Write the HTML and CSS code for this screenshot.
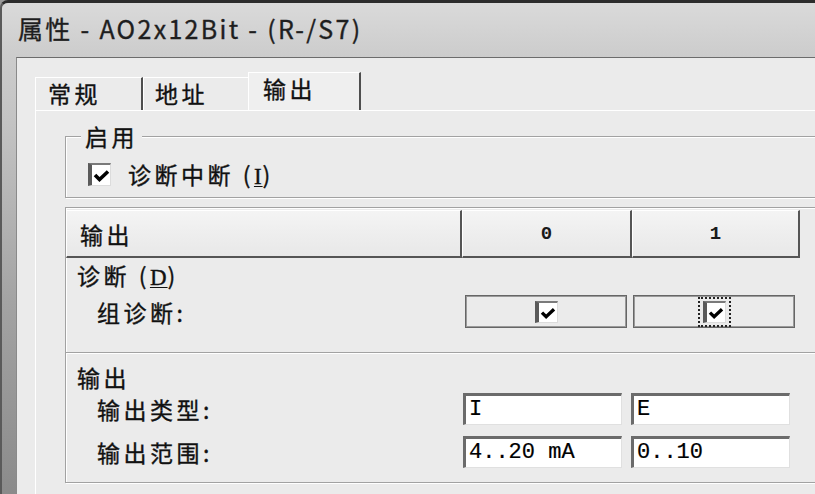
FILE: index.html
```html
<!DOCTYPE html>
<html lang="zh-CN">
<head>
<meta charset="utf-8">
<title>属性 - AO2x12Bit - (R-/S7)</title>
<link rel="stylesheet" href="styles.css">
</head>
<body>
<div class="window">
  <div class="titlebar">属性 - AO2x12Bit - (R-/S7)</div>
  <div class="client">
    <div class="tabs">
      <div class="tab tab-general">常规</div>
      <div class="tab tab-address">地址</div>
      <div class="tab tab-active">输出</div>
    </div>
    <div class="panel">
      <fieldset class="group">
        <legend>启用</legend>
        <div class="chk">
          <span class="box"><svg viewBox="0 0 16 14" width="17" height="14"><path d="M1.5 6 L6 10.5 L14.5 2.5" fill="none" stroke="#000" stroke-width="3.6"/></svg></span>
          <span class="chk-text">诊断中断 (<u class="acc">I</u>)</span>
        </div>
      </fieldset>
      <div class="grid">
        <div class="hrow">
          <div class="hcell hlabel">输出</div>
          <div class="hcell hcol0">0</div>
          <div class="hcell hcol1">1</div>
        </div>
        <div class="sec sec-diag">
          <div class="stitle">诊断 (<u class="acc">D</u>)</div>
          <div class="row row-cb">
            <div class="rlabel rlabel-cb">组诊断:</div>
            <div class="cbcell">
              <span class="box box-sm"><svg viewBox="0 0 16 14" width="16" height="13"><path d="M1.5 6 L6 10.5 L14.5 2.5" fill="none" stroke="#000" stroke-width="3.6"/></svg></span>
            </div>
            <div class="cbcell">
              <span class="focus"><span class="box box-sm"><svg viewBox="0 0 16 14" width="16" height="13"><path d="M1.5 6 L6 10.5 L14.5 2.5" fill="none" stroke="#000" stroke-width="3.6"/></svg></span></span>
            </div>
          </div>
        </div>
        <div class="sec sec-out">
          <div class="stitle">输出</div>
          <div class="row row-in">
            <div class="rlabel rlabel-in">输出类型:</div>
            <div class="field">I</div>
            <div class="field">E</div>
          </div>
          <div class="row row-in row-in2">
            <div class="rlabel rlabel-in">输出范围:</div>
            <div class="field">4..20 mA</div>
            <div class="field">0..10</div>
          </div>
        </div>
      </div>
    </div>
  </div>
</div>
</body>
</html>
```
FILE: styles.css
```css
* { box-sizing: border-box; }
html, body {
  margin: 0;
  padding: 0;
  width: 815px;
  height: 494px;
  overflow: hidden;
}
body {
  font-family: "Noto Sans CJK SC", "Noto Sans", sans-serif;
  color: #111;
  background: #9a9a9a;
  -webkit-text-stroke: 0.35px currentColor;
}
.window {
  width: 815px;
  height: 494px;
  border-top: 3px solid #2c2c2c;
  border-left: 2px solid #5a5a5a;
  border-top-left-radius: 8px;
  background: linear-gradient(to bottom, #dadada 0, #cccccc 54px, #c3c3c3 120px, #a3a3a3 300px, #8a8a8a 494px);
  display: flex;
  flex-direction: column;
  overflow: hidden;
}
.titlebar {
  height: 54px;
  flex: none;
  display: flex;
  align-items: center;
  padding: 0 0 4px 16px;
  font-size: 25px;
  letter-spacing: 2.3px;
  color: #1e1e1e;
  white-space: nowrap;
}
.client {
  flex: 1;
  margin-left: 14px;
  border-top: 1px solid #6c6c6c;
  border-left: 1px solid #8a8a8a;
  background: #ebebeb;
  padding: 14px 0 0 18px;
  display: flex;
  flex-direction: column;
}
.tabs {
  display: flex;
  align-items: flex-end;
  height: 38px;
  flex: none;
}
.tab {
  height: 33px;
  border-top: 1px solid #fff;
  border-left: 1px solid #fff;
  font-size: 23px;
  letter-spacing: 3.5px;
  line-height: 28px;
  padding-top: 1px;
  white-space: nowrap;
}
.tab-general {
  width: 108px;
  padding-left: 12px;
  border-right: 2px solid #4e4e4e;
}
.tab-address {
  width: 105px;
  padding-left: 11px;
}
.tab-active {
  width: 113px;
  height: 38px;
  padding-left: 14px;
  border-right: 2px solid #4e4e4e;
  background: #efefef;
}
.panel {
  flex: 1;
  border-top: 1px solid #fff;
  border-left: 1px solid #fff;
  margin-right: -80px;
  padding: 12px 0 0 29px;
}
.group {
  margin: 0;
  min-width: 0;
  border: 1px solid #a2a2a2;
  box-shadow: inset 1px 1px 0 #fff, 1px 1px 0 #fff;
  padding: 0 0 11px 15px;
}
.group legend {
  padding: 0 4px;
  font-size: 23px;
  letter-spacing: 3.5px;
  line-height: 26px;
  background: #ebebeb;
}
.chk {
  display: flex;
  align-items: center;
  height: 24px;
  margin: 13px 0 0 7px;
  font-size: 23px;
  letter-spacing: 3.5px;
  white-space: nowrap;
}
.box {
  width: 23px;
  height: 23px;
  flex: none;
  display: flex;
  align-items: center;
  justify-content: center;
  background: #fff;
  border-top: 2px solid #7a7a7a;
  border-left: 4px solid #5a5a5a;
  border-right: 1px solid #dcdcdc;
  border-bottom: 1px solid #dcdcdc;
  padding-top: 3px;
  -webkit-text-stroke: 0;
}
.chk .box { margin-right: 17px; }
.acc {
  font-family: "Liberation Serif", serif;
  line-height: 1;
  text-decoration-thickness: 1px;
  text-underline-offset: 2px;
  letter-spacing: 1px;
}
.grid {
  margin-top: 9px;
  border-top: 1px solid #a2a2a2;
  border-left: 1px solid #a2a2a2;
  box-shadow: inset 1px 1px 0 #fff;
}
.hrow {
  display: flex;
  margin-top: 2px;
  height: 48px;
}
.hcell {
  height: 48px;
  display: flex;
  align-items: center;
  border-top: 1px solid #fff;
  border-left: 1px solid #fff;
  border-right: 2px solid #555;
  border-bottom: 2px solid #555;
  background: linear-gradient(#f4f4f4, #e8e8e8);
}
.hlabel {
  width: 396px;
  padding-left: 13px;
  font-size: 23px;
  letter-spacing: 3.5px;
}
.hcol0, .hcol1 {
  justify-content: center;
  font-family: "Liberation Mono", monospace;
  font-size: 19px;
  font-weight: bold;
  -webkit-text-stroke: 0;
  color: #1a1a1a;
}
.hcol0 { width: 170px; }
.hcol1 { width: 168px; }
.sec {
  border-bottom: 1px solid #a2a2a2;
  box-shadow: 0 1px 0 #fff;
}
.sec-diag { padding: 4px 0 24px 0; }
.sec-out { padding: 11px 0 14px 0; }
.stitle {
  height: 26px;
  padding-left: 11px;
  font-size: 23px;
  letter-spacing: 3.5px;
  line-height: 26px;
  white-space: nowrap;
}
.row {
  display: flex;
  align-items: center;
}
.rlabel {
  padding-left: 31px;
  font-size: 23px;
  letter-spacing: 3.5px;
  white-space: nowrap;
}
.row-cb { margin-top: 7px; height: 33px; }
.rlabel-cb { width: 399px; }
.cbcell {
  width: 162px;
  height: 33px;
  margin-right: 6px;
  display: flex;
  align-items: center;
  justify-content: center;
  border: 1px solid #666;
  box-shadow: inset 1px 1px 0 #9a9a9a, inset -1px -1px 0 #9a9a9a;
}
.box-sm {
  width: 23px;
  height: 22px;
  border-left-width: 4px;
  padding-top: 2px;
}
.focus {
  display: flex;
  padding: 2px 3px;
  border: 2px dotted #222;
}
.row-in { margin-top: 3px; height: 32px; }
.row-in2 { margin-top: 11px; }
.rlabel-in { width: 397px; }
.field {
  width: 159px;
  height: 32px;
  margin-right: 9px;
  background: #fff;
  border-top: 3px solid #6b6b6b;
  border-left: 3px solid #6b6b6b;
  border-right: 1px solid #e0e0e0;
  border-bottom: 1px solid #e0e0e0;
  padding-left: 3px;
  font-family: "Liberation Mono", monospace;
  font-size: 22px;
  line-height: 27px;
  color: #000;
  white-space: pre;
  -webkit-text-stroke: 0.2px currentColor;
}
```
